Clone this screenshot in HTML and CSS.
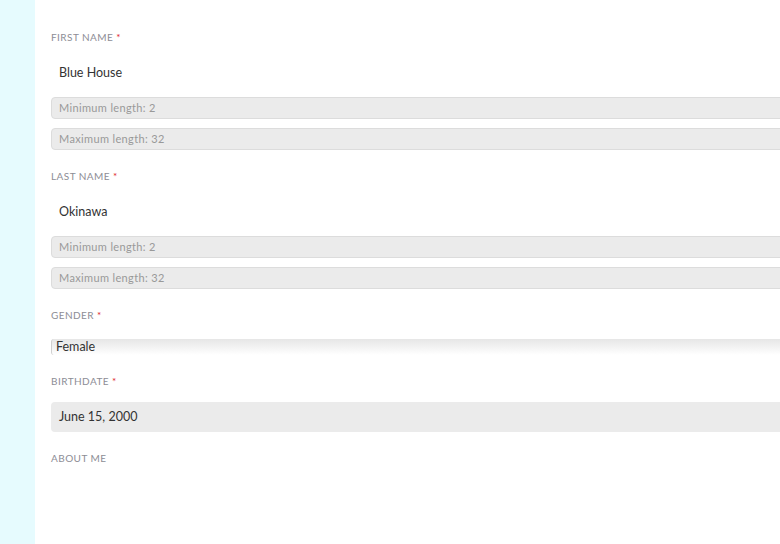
FILE: index.html
```html
<!DOCTYPE html>
<html lang="en">
<head>
  <meta charset="UTF-8" />
  <meta name="viewport" content="width=device-width, initial-scale=1.0"/>
  <title>Profile</title>
  <link rel="stylesheet" href="styles.css">
</head>
<body>
  <div class="sidebar"></div>

  <div class="main">
    <div class="field">
      <label class="field-label">First name <span class="req">*</span></label>
      <div class="field-value">Blue House</div>
      <div class="hint">Minimum length: 2</div>
      <div class="hint">Maximum length: 32</div>
    </div>

    <div class="field">
      <label class="field-label">Last name <span class="req">*</span></label>
      <div class="field-value">Okinawa</div>
      <div class="hint">Minimum length: 2</div>
      <div class="hint">Maximum length: 32</div>
    </div>

    <div class="field">
      <label class="field-label">Gender <span class="req">*</span></label>
      <div class="select-value">Female</div>
    </div>

    <div class="field">
      <label class="field-label">Birthdate <span class="req">*</span></label>
      <div class="field-value date">June 15, 2000</div>
    </div>

    <div class="field">
      <label class="field-label">About me</label>
    </div>
  </div>
</body>
</html>
```

FILE: styles.css
```css
body {
  margin: 0;
  font-family: Lato, 'Noto Sans', sans-serif;
  background: white;
  display: flex;
  min-height: 100vh;
  overflow: hidden;
}

.sidebar {
  width: 35px;
  flex-shrink: 0;
  background: #e6fbfe;
}

.main {
  flex: 1;
  padding: 30px 0 0 16px;
  margin-right: -10px;
}

.field {
  margin-bottom: 19px;
}

.field-label {
  display: block;
  height: 14px;
  line-height: 14px;
  font-size: 10px;
  color: #8d8d95;
  text-transform: uppercase;
  letter-spacing: 0.45px;
}

.req {
  color: #e0262b;
}

.field-value {
  margin-top: 14px;
  height: 30px;
  line-height: 30px;
  padding-left: 8px;
  font-size: 12.5px;
  color: #333;
}

.field-value.date {
  background: #ebebeb;
  border-radius: 4px;
}

.hint {
  margin-top: 9px;
  height: 20px;
  line-height: 20px;
  padding-left: 7px;
  font-size: 11px;
  letter-spacing: 0.35px;
  color: #999;
  background: #ebebeb;
  border: 1px solid #dcdcdc;
  border-radius: 4px;
}

.select-value {
  margin-top: 17px;
  height: 16px;
  line-height: 16px;
  padding-left: 4px;
  font-size: 12.5px;
  color: #333;
  border-left: 1px solid #d0d0d0;
  border-radius: 3px 0 0 3px;
  background: linear-gradient(to bottom, #e6e6e6, #ffffff);
}
```
